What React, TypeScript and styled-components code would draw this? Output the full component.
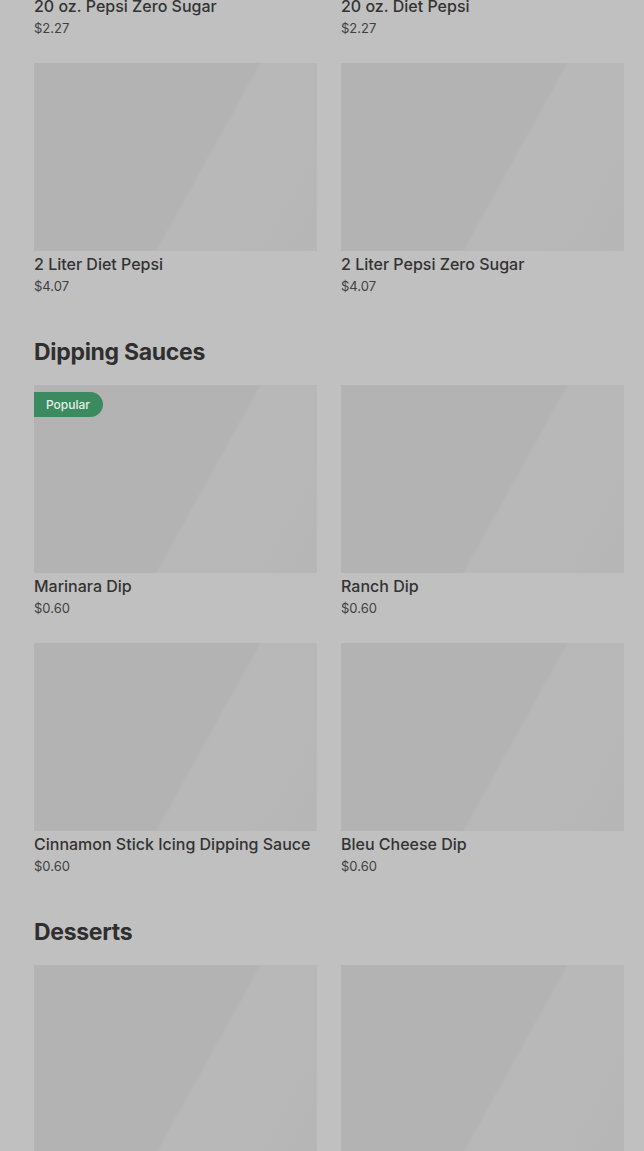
import React from 'react'
import styled, { createGlobalStyle } from 'styled-components'

interface MenuItem {
    title: string
    price: string
    popular?: boolean
}

interface MenuSection {
    heading?: string
    items: MenuItem[]
}

const GlobalStyle = createGlobalStyle`
    html, body {
        margin: 0;
        padding: 0;
        background: #c0c0c0;
        overflow: hidden;
    }
    body {
        font-family: Inter, "Noto Sans", "Liberation Sans", sans-serif;
        -webkit-font-smoothing: antialiased;
    }
`

const Page = styled.main`
    width: 644px;
    height: 1151px;
    overflow: hidden;
    background: #c0c0c0;
`

// the list is scrolled, the first row's picture sits above the fold
const Scroller = styled.div`
    margin-top: -195px;
    padding: 0 20px 0 34px;
`

const Section = styled.section`
    display: flex;
    flex-direction: column;
`

const SectionTitle = styled.h2`
    margin: 39px 0 17px;
    height: 32px;
    line-height: 32px;
    font-size: 23px;
    font-weight: 700;
    letter-spacing: -0.3px;
    color: #2f2f2f;
`

const Grid = styled.div`
    display: grid;
    grid-template-columns: 283px 283px;
    column-gap: 24px;
    row-gap: 24px;
`

const Card = styled.article`
    display: flex;
    flex-direction: column;
    height: 234px;
`

const Picture = styled.div`
    position: relative;
    height: 188px;
    background: linear-gradient(119deg, #b3b3b3 0%, #b3b3b3 58%, #b8b8b8 59%, #b8b8b8 78%, #b6b6b6 100%);
`

const Badge = styled.span`
    position: absolute;
    top: 7px;
    left: 0;
    height: 25px;
    padding: 0 13px 0 12px;
    display: flex;
    align-items: center;
    border-radius: 0 12.5px 12.5px 0;
    background: #3b8a60;
    color: #e6efe9;
    font-size: 12px;
    font-weight: 500;
`

const ItemTitle = styled.div`
    margin-top: 1px;
    line-height: 24px;
    font-size: 16px;
    font-weight: 500;
    color: #333333;
    white-space: nowrap;
`

const ItemPrice = styled.div`
    line-height: 20px;
    font-size: 13px;
    color: #404040;
`

const sections: MenuSection[] = [
    {
        items: [
            { title: '20 oz. Pepsi Zero Sugar', price: '$2.27' },
            { title: '20 oz. Diet Pepsi', price: '$2.27' },
            { title: '2 Liter Diet Pepsi', price: '$4.07' },
            { title: '2 Liter Pepsi Zero Sugar', price: '$4.07' },
        ],
    },
    {
        heading: 'Dipping Sauces',
        items: [
            { title: 'Marinara Dip', price: '$0.60', popular: true },
            { title: 'Ranch Dip', price: '$0.60' },
            { title: 'Cinnamon Stick Icing Dipping Sauce', price: '$0.60' },
            { title: 'Bleu Cheese Dip', price: '$0.60' },
        ],
    },
    {
        heading: 'Desserts',
        items: [
            { title: '', price: '' },
            { title: '', price: '' },
        ],
    },
]

const App = () => {
    return (
        <Page>
            <GlobalStyle />
            <Scroller>
                {sections.map((section, i) => (
                    <Section key={i}>
                        {section.heading && <SectionTitle>{section.heading}</SectionTitle>}
                        <Grid>
                            {section.items.map((item, j) => (
                                <Card key={j}>
                                    <Picture>{item.popular && <Badge>Popular</Badge>}</Picture>
                                    <ItemTitle>{item.title}</ItemTitle>
                                    <ItemPrice>{item.price}</ItemPrice>
                                </Card>
                            ))}
                        </Grid>
                    </Section>
                ))}
            </Scroller>
        </Page>
    )
}

export default App
